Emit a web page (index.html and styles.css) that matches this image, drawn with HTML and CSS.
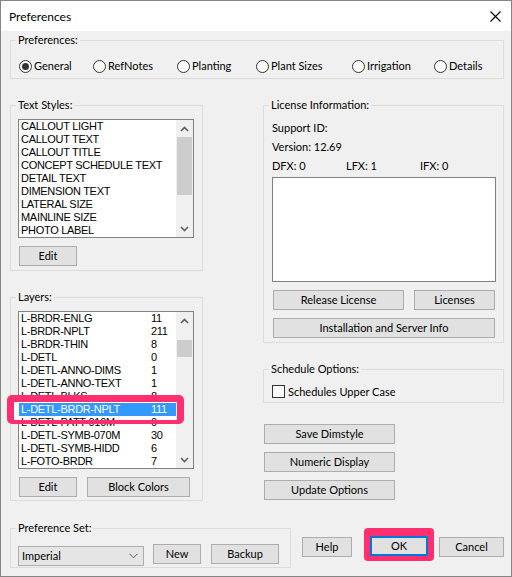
FILE: index.html
```html
<!DOCTYPE html>
<html>
<head>
<meta charset="utf-8">
<title>Preferences</title>
<link rel="stylesheet" href="styles.css">
</head>
<body>
<div class="window">
  <div class="titlebar">
    <span class="title">Preferences</span>
    <svg class="close" width="11" height="11" viewBox="0 0 11 11"><path d="M0.5 0.5 L10.5 10.5 M10.5 0.5 L0.5 10.5" stroke="#000" stroke-width="1.1" fill="none"/></svg>
  </div>
  <div class="body">
    <fieldset class="group g-prefs">
      <legend>Preferences:</legend>
      <div class="gbody radios">
        <label class="radio"><span class="rdot on"></span><span>General</span></label>
        <label class="radio"><span class="rdot"></span><span>RefNotes</span></label>
        <label class="radio"><span class="rdot"></span><span>Planting</span></label>
        <label class="radio"><span class="rdot"></span><span>Plant Sizes</span></label>
        <label class="radio"><span class="rdot"></span><span>Irrigation</span></label>
        <label class="radio"><span class="rdot"></span><span>Details</span></label>
      </div>
    </fieldset>

    <div class="columns">
      <div class="col">
        <fieldset class="group g-text">
          <legend>Text Styles:</legend>
          <div class="gbody">
            <div class="listbox lb-text">
              <div class="items">
                <div class="item">CALLOUT LIGHT</div>
                <div class="item">CALLOUT TEXT</div>
                <div class="item">CALLOUT TITLE</div>
                <div class="item">CONCEPT SCHEDULE TEXT</div>
                <div class="item">DETAIL TEXT</div>
                <div class="item">DIMENSION TEXT</div>
                <div class="item">LATERAL SIZE</div>
                <div class="item">MAINLINE SIZE</div>
                <div class="item">PHOTO LABEL</div>
              </div>
              <div class="vscroll">
                <span class="arrow"><svg width="9" height="6" viewBox="0 0 9 6"><polyline points="1,5 4.5,1.5 8,5" fill="none" stroke="#606060" stroke-width="1.6"/></svg></span>
                <span class="track"><span class="thumb thumb-text"></span></span>
                <span class="arrow"><svg width="9" height="6" viewBox="0 0 9 6"><polyline points="1,1 4.5,4.5 8,1" fill="none" stroke="#606060" stroke-width="1.6"/></svg></span>
              </div>
            </div>
            <div class="btnrow"><button class="btn w-edit">Edit</button></div>
          </div>
        </fieldset>

        <fieldset class="group g-layers">
          <legend>Layers:</legend>
          <div class="gbody">
            <div class="listbox lb-layers">
              <div class="items">
                <div class="item lay"><span>L-BRDR-ENLG</span><span>11</span></div>
                <div class="item lay"><span>L-BRDR-NPLT</span><span>211</span></div>
                <div class="item lay"><span>L-BRDR-THIN</span><span>8</span></div>
                <div class="item lay"><span>L-DETL</span><span>0</span></div>
                <div class="item lay"><span>L-DETL-ANNO-DIMS</span><span>1</span></div>
                <div class="item lay"><span>L-DETL-ANNO-TEXT</span><span>1</span></div>
                <div class="item lay"><span>L-DETL-BLKS</span><span>8</span></div>
                <div class="item lay sel"><span>L-DETL-BRDR-NPLT</span><span>111</span></div>
                <div class="item lay"><span>L-DETL-PATT-010M</span><span>0</span></div>
                <div class="item lay"><span>L-DETL-SYMB-070M</span><span>30</span></div>
                <div class="item lay"><span>L-DETL-SYMB-HIDD</span><span>6</span></div>
                <div class="item lay"><span>L-FOTO-BRDR</span><span>7</span></div>
              </div>
              <div class="vscroll">
                <span class="arrow"><svg width="9" height="6" viewBox="0 0 9 6"><polyline points="1,5 4.5,1.5 8,5" fill="none" stroke="#606060" stroke-width="1.6"/></svg></span>
                <span class="track"><span class="thumb thumb-layers"></span></span>
                <span class="arrow"><svg width="9" height="6" viewBox="0 0 9 6"><polyline points="1,1 4.5,4.5 8,1" fill="none" stroke="#606060" stroke-width="1.6"/></svg></span>
              </div>
              <div class="mark-row"></div>
            </div>
            <div class="btnrow gap10"><button class="btn w-edit">Edit</button><button class="btn w-block">Block Colors</button></div>
          </div>
        </fieldset>
      </div>

      <div class="col">
        <fieldset class="group g-license">
          <legend>License Information:</legend>
          <div class="gbody">
            <div class="info">Support ID:</div>
            <div class="info">Version: 12.69</div>
            <div class="info fx"><span>DFX: 0</span><span>LFX: 1</span><span>IFX: 0</span></div>
            <div class="textbox"></div>
            <div class="btnrow gap10 ind"><button class="btn w-release">Release License</button><button class="btn w-lic">Licenses</button></div>
            <div class="btnrow ind mt8"><button class="btn w-install">Installation and Server Info</button></div>
          </div>
        </fieldset>

        <fieldset class="group g-sched">
          <legend>Schedule Options:</legend>
          <div class="gbody">
            <label class="check"><span class="cbox"></span><span>Schedules Upper Case</span></label>
          </div>
        </fieldset>

        <div class="stack">
          <button class="btn w-stack">Save Dimstyle</button>
          <button class="btn w-stack">Numeric Display</button>
          <button class="btn w-stack">Update Options</button>
        </div>
      </div>
    </div>

    <div class="bottom">
      <fieldset class="group g-set">
        <legend>Preference Set:</legend>
        <div class="gbody setrow">
          <div class="combo"><span>Imperial</span><svg width="9" height="6" viewBox="0 0 9 6"><polyline points="0.5,0.8 4.5,4.8 8.5,0.8" fill="none" stroke="#555" stroke-width="1"/></svg></div>
          <button class="btn w-new">New</button>
          <button class="btn w-backup">Backup</button>
        </div>
      </fieldset>
      <div class="dlg">
        <button class="btn w-help">Help</button>
        <span class="hl"><button class="btn btn-default w-ok">OK</button></span>
        <button class="btn w-cancel">Cancel</button>
      </div>
    </div>
  </div>
</div>
</body>
</html>
```
FILE: styles.css
```css
* { box-sizing: border-box; }
html, body { margin: 0; padding: 0; }
body {
  font-family: "Lato", "Liberation Sans", sans-serif;
  font-size: 11px;
  color: #000;
  background: #f0f0f0;
}
.window {
  width: 512px;
  height: 577px;
  border: 1px solid #858585;
  display: flex;
  flex-direction: column;
  background: #f0f0f0;
}
.titlebar {
  flex: none;
  height: 30px;
  background: #fff;
  display: flex;
  align-items: center;
  justify-content: space-between;
  padding: 0 10px 0 8px;
}
.title { font-size: 12px; }
.close { display: block; }

.body { flex: 1; padding: 0 7px 0 9px; }

.group {
  margin: 0;
  padding: 0;
  border: 1px solid #dcdcdc;
  min-width: 0;
}
.group > legend {
  margin-left: 5px;
  padding: 0 2px;
  line-height: 14px;
  font-size: 11px;
}

/* Preferences radios */
.g-prefs { margin-top: 2px; }
.radios {
  padding: 12px 0 5px 8px;
  display: grid;
  grid-template-columns: 74px 84px 79px 96px 82px auto;
}
.radio {
  display: flex;
  align-items: center;
  gap: 2px;
  line-height: 14px;
  height: 14px;
}
.rdot {
  width: 13px;
  height: 13px;
  border: 1px solid #333;
  border-radius: 50%;
  background: #fff;
  display: flex;
  align-items: center;
  justify-content: center;
  flex: none;
}
.rdot.on::after {
  content: "";
  width: 7px;
  height: 7px;
  border-radius: 50%;
  background: #333;
}

/* columns */
.columns {
  display: grid;
  grid-template-columns: 193px 241px;
  column-gap: 60px;
  align-items: start;
}
.col { display: flex; flex-direction: column; }
.g-text, .g-license { margin-top: 19px; }
.g-text .gbody { padding: 7px 0 4px 7px; }
.g-layers { margin-top: 19px; }
.g-layers .gbody { padding: 7px 0 3px 7px; }

/* listbox */
.listbox {
  position: relative;
  width: 176px;
  background: #fff;
  border: 1px solid #828282;
  display: flex;
}
.lb-text { height: 119px; }
.lb-layers { height: 158px; }
.items { flex: 1; min-width: 0; overflow: hidden; }
.item {
  height: 13px;
  line-height: 13px;
  padding-left: 2px;
  font-family: "Liberation Sans", Arial, sans-serif;
  font-size: 11px;
  letter-spacing: -0.3px;
  white-space: nowrap;
  color: #000;
}
.item.lay { display: grid; grid-template-columns: 130px auto; }
.item.sel { background: #3399ff; color: #fff; }

.vscroll {
  width: 17px;
  flex: none;
  background: #f0f0f0;
  display: flex;
  flex-direction: column;
}
.arrow {
  height: 17px;
  flex: none;
  display: flex;
  align-items: center;
  justify-content: center;
}
.arrow svg { display: block; }
.track { flex: 1; display: flex; flex-direction: column; padding: 0 1px; }
.thumb { display: block; background: #cdcdcd; }
.thumb-text { height: 58px; }
.thumb-layers { height: 17px; margin-top: 11px; }

.mark-row {
  position: absolute;
  left: -12px;
  top: 83px;
  width: 177px;
  height: 29px;
  border-style: solid;
  border-color: #fe2f6e;
  border-width: 7px 7px 4px 7px;
  border-radius: 5px;
  box-shadow: inset 5px 0 0 #fff;
}

/* buttons */
.btn {
  height: 20px;
  padding: 0;
  margin: 0;
  background: #e1e1e1;
  border: 1px solid #adadad;
  font-family: "Lato", "Liberation Sans", sans-serif;
  font-size: 11px;
  line-height: 18px;
  color: #000;
  text-align: center;
  border-radius: 0;
}
.btn-default { border: 2px solid #0078d7; line-height: 16px; }
.btnrow { display: flex; margin-top: 8px; padding-left: 1px; }
.gap10 { gap: 10px; }
.w-edit { width: 58px; }
.w-block { width: 103px; }
.w-release { width: 131px; }
.w-lic { width: 81px; }
.w-install { width: 222px; }
.w-stack { width: 131px; }
.w-new { width: 48px; }
.w-backup { width: 68px; }
.w-help { width: 50px; }
.w-ok { width: 58px; }
.w-cancel { width: 65px; }

/* license */
.g-license .gbody { padding: 6px 0 4px 8px; }
.info { line-height: 19px; height: 19px; }
.fx { display: grid; grid-template-columns: 74px 74px auto; }
.textbox {
  margin-top: 2px;
  width: 224px;
  height: 105px;
  background: #fff;
  border: 1px solid #828282;
}
.mt8 { margin-top: 8px; }

/* schedule */
.g-sched { margin-top: 19px; }
.g-sched .gbody { padding: 9px 0 4px 8px; }
.check { display: flex; align-items: center; gap: 3px; height: 13px; line-height: 13px; }
.cbox {
  width: 13px;
  height: 13px;
  border: 1px solid #333;
  background: #fff;
  flex: none;
}

.stack {
  margin-top: 21px;
  padding-left: 1px;
  display: flex;
  flex-direction: column;
  gap: 8px;
}

/* bottom */
.bottom { display: flex; align-items: flex-start; margin-top: 20px; }
.g-set { width: 281px; }
.setrow {
  padding: 9px 0 1px 7px;
  display: flex;
  align-items: flex-start;
}
.combo {
  margin-top: 2px;
  width: 126px;
  height: 20px;
  background: #e5e5e5;
  border: 1px solid #adadad;
  display: flex;
  align-items: center;
  justify-content: space-between;
  padding: 0 5px 0 3px;
  line-height: 18px;
}
.combo svg { display: block; }
.w-new { margin-left: 9px; }
.w-backup { margin-left: 10px; }

.dlg { display: flex; align-items: flex-start; margin-left: 11px; }
.w-help { margin-top: 16px; }
.hl {
  margin-top: 7px;
  margin-left: 12px;
  padding: 8px 6px 5px 6px;
  background: #fe2f6e;
  border-radius: 4px;
  display: flex;
}
.w-cancel { margin-top: 16px; margin-left: 5px; }
```
